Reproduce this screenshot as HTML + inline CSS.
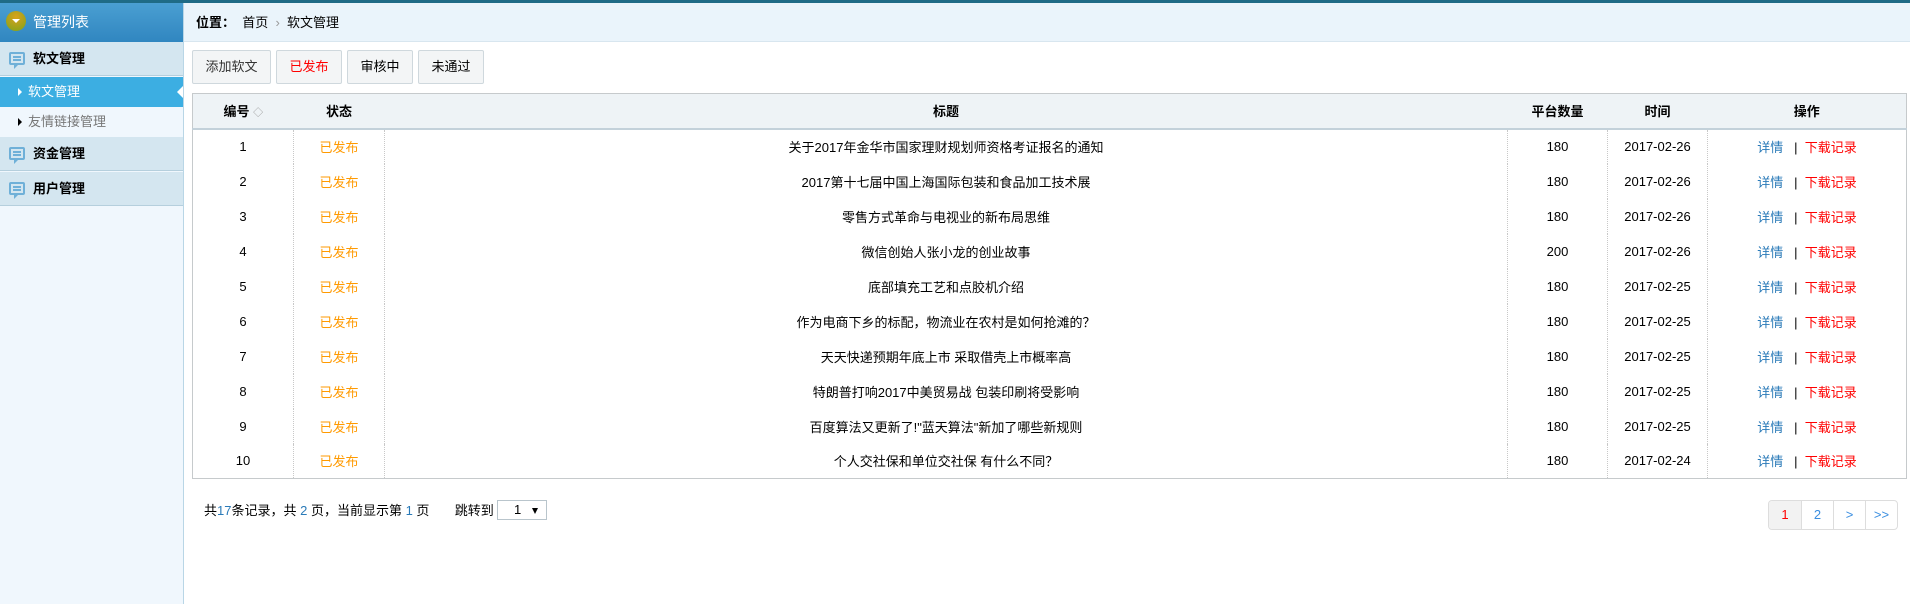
<!DOCTYPE html>
<html><head><meta charset="utf-8"><style>
*{margin:0;padding:0;box-sizing:border-box}
body{width:1910px;height:604px;overflow:hidden;background:#fff;font-family:"Liberation Sans","Noto Sans CJK SC",sans-serif;font-size:13px;color:#000;position:relative}
.top{position:absolute;left:0;top:0;width:1910px;height:3px;background:#1f6b86}
.side{position:absolute;left:0;top:0;width:184px;height:604px;background:#f0f7fd;border-right:1px solid #b9d6e6}
.sh{position:absolute;left:0;top:3px;width:183px;height:39px;background:linear-gradient(#4a9fd2,#3086c0);color:#fff;font-size:14px;line-height:39px;padding-left:33px}
.circ{position:absolute;left:6px;top:8px;width:20px;height:20px;border-radius:50%;background:radial-gradient(circle at 50% 30%,#d9a21c,#7da31b)}
.circ:after{content:"";position:absolute;left:6px;top:8px;border-left:4px solid transparent;border-right:4px solid transparent;border-top:4px solid #fff}
.grp{position:absolute;left:0;width:183px;height:34px;background:#d4e6f0;border-bottom:1px solid #b5cfdd;font-weight:bold;line-height:34px;padding-left:33px}
.ic{position:absolute;left:9px;top:10px;width:16px;height:13px;border:2px solid #6fb0d8;border-radius:2px}
.ic:before{content:"";position:absolute;left:2px;top:2px;width:8px;height:2px;background:#6fb0d8;box-shadow:0 3px 0 #6fb0d8}
.ic:after{content:"";position:absolute;left:3px;top:11px;border-left:4px solid #6fb0d8;border-bottom:4px solid transparent}
.it{position:absolute;left:0;width:183px;height:30px;line-height:30px;padding-left:28px}
.it:before{content:"";position:absolute;left:18px;top:11px;border-top:4px solid transparent;border-bottom:4px solid transparent;border-left:4px solid #000}
.act{background:#3caee2;color:#fff}
.act:before{border-left-color:#fff}
.act:after{content:"";position:absolute;right:0;top:9px;border-top:6px solid transparent;border-bottom:6px solid transparent;border-right:6px solid #fff}
.hd{position:absolute;left:184px;top:3px;width:1726px;height:39px;background:#eaf4fb;border-bottom:1px solid #d8e6ef;line-height:39px;padding-left:12px}
.btn{position:absolute;top:50px;height:34px;border:1px solid #cfd8dd;border-radius:2px;background:#f3f5f6;line-height:32px;text-align:center}
table{position:absolute;left:192px;top:93px;width:1715px;border-collapse:collapse;border:1px solid #c6cacc}
th{height:35px;background:#eef3f6;border-bottom:2px solid #c3d1da;font-weight:bold}
td{height:35px;text-align:center;border-left:1px dotted #c8c8c8}
td:first-child{border-left:none}
.o{color:#ff9a00}.b{color:#2a7ab8}.r{color:#f00}
.ft{position:absolute;left:204px;top:501px;line-height:20px}
.sel{position:absolute;left:497px;top:500px;width:50px;height:20px;border:1px solid #b9c5cc;line-height:18px;padding-left:16px}
.sel:after{content:"";position:absolute;right:8px;top:7px;border-left:3px solid transparent;border-right:3px solid transparent;border-top:6px solid #000}
.pg{position:absolute;left:1768px;top:500px;height:30px;border:1px solid #ddd;border-radius:4px;display:flex;overflow:hidden}
.pg span{width:32px;line-height:28px;text-align:center;border-left:1px solid #ddd;color:#3a8ee0}
.pg span:first-child{border-left:none;background:#f2f2f2;color:#f00}
</style></head><body>
<div class="side">
<div class="sh"><div class="circ"></div>管理列表</div>
<div class="grp" style="top:42px"><div class="ic"></div>软文管理</div>
<div class="it act" style="top:77px">软文管理</div>
<div class="it" style="top:107px;color:#777">友情链接管理</div>
<div class="grp" style="top:137px"><div class="ic"></div>资金管理</div>
<div class="grp" style="top:172px"><div class="ic"></div>用户管理</div>
</div>
<div class="top"></div>
<div class="hd"><b>位置：</b>&nbsp; 首页 <span style="color:#999">&nbsp;›&nbsp;</span> 软文管理</div>
<div class="btn" style="left:192px;width:79px;color:#333">添加软文</div>
<div class="btn" style="left:276px;width:66px;color:#f00">已发布</div>
<div class="btn" style="left:347px;width:66px">审核中</div>
<div class="btn" style="left:418px;width:66px">未通过</div>
<table>
<tr><th style="width:101px">编号 <span style="color:#999;font-weight:normal;font-size:10px">◇</span></th><th style="width:91px">状态</th><th>标题</th><th style="width:100px">平台数量</th><th style="width:100px">时间</th><th style="width:199px">操作</th></tr>
<tr><td>1</td><td class="o">已发布</td><td>关于2017年金华市国家理财规划师资格考证报名的通知</td><td>180</td><td>2017-02-26</td><td><span class="b">详情</span> &nbsp; | &nbsp;<span class="r">下载记录</span></td></tr>
<tr><td>2</td><td class="o">已发布</td><td>2017第十七届中国上海国际包装和食品加工技术展</td><td>180</td><td>2017-02-26</td><td><span class="b">详情</span> &nbsp; | &nbsp;<span class="r">下载记录</span></td></tr>
<tr><td>3</td><td class="o">已发布</td><td>零售方式革命与电视业的新布局思维</td><td>180</td><td>2017-02-26</td><td><span class="b">详情</span> &nbsp; | &nbsp;<span class="r">下载记录</span></td></tr>
<tr><td>4</td><td class="o">已发布</td><td>微信创始人张小龙的创业故事</td><td>200</td><td>2017-02-26</td><td><span class="b">详情</span> &nbsp; | &nbsp;<span class="r">下载记录</span></td></tr>
<tr><td>5</td><td class="o">已发布</td><td>底部填充工艺和点胶机介绍</td><td>180</td><td>2017-02-25</td><td><span class="b">详情</span> &nbsp; | &nbsp;<span class="r">下载记录</span></td></tr>
<tr><td>6</td><td class="o">已发布</td><td>作为电商下乡的标配，物流业在农村是如何抢滩的？</td><td>180</td><td>2017-02-25</td><td><span class="b">详情</span> &nbsp; | &nbsp;<span class="r">下载记录</span></td></tr>
<tr><td>7</td><td class="o">已发布</td><td>天天快递预期年底上市 采取借壳上市概率高</td><td>180</td><td>2017-02-25</td><td><span class="b">详情</span> &nbsp; | &nbsp;<span class="r">下载记录</span></td></tr>
<tr><td>8</td><td class="o">已发布</td><td>特朗普打响2017中美贸易战 包装印刷将受影响</td><td>180</td><td>2017-02-25</td><td><span class="b">详情</span> &nbsp; | &nbsp;<span class="r">下载记录</span></td></tr>
<tr><td>9</td><td class="o">已发布</td><td>百度算法又更新了!"蓝天算法"新加了哪些新规则</td><td>180</td><td>2017-02-25</td><td><span class="b">详情</span> &nbsp; | &nbsp;<span class="r">下载记录</span></td></tr>
<tr><td>10</td><td class="o">已发布</td><td>个人交社保和单位交社保 有什么不同？</td><td>180</td><td>2017-02-24</td><td><span class="b">详情</span> &nbsp; | &nbsp;<span class="r">下载记录</span></td></tr>
</table>
<div class="ft">共<span class="b">17</span>条记录，共 <span class="b">2</span> 页，当前显示第 <span class="b">1</span> 页 &nbsp; &nbsp; &nbsp; 跳转到</div>
<div class="sel">1</div>
<div class="pg"><span>1</span><span>2</span><span>&gt;</span><span>&gt;&gt;</span></div>
</body></html>
